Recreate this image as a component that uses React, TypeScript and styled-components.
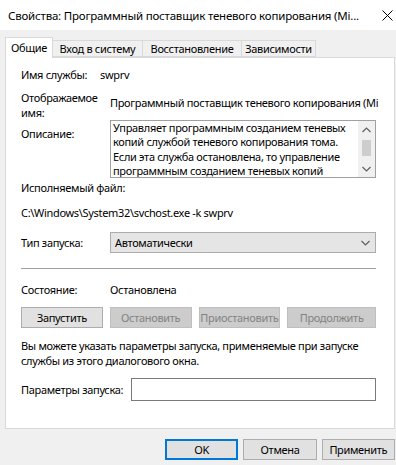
import React from "react";
import styled, { createGlobalStyle } from "styled-components";

const Global = createGlobalStyle`
  html, body { margin: 0; padding: 0; background: #f0f0f0; }
  body {
    font-family: "Noto Sans", "Segoe UI", sans-serif;
    font-size: 11px;
    letter-spacing: -0.32px;
    color: #000;
  }
`;

const Window = styled.div`
  width: 396px;
  height: 465px;
  background: #f0f0f0;
  overflow: hidden;
  display: flex;
  flex-direction: column;
`;

const TitleBar = styled.div`
  height: 30px;
  background: #fff;
  display: flex;
  align-items: center;
  justify-content: space-between;
  padding: 0 3px 0 8px;
  white-space: nowrap;
  font-size: 11.5px;
  letter-spacing: -0.2px;
`;

const Close = styled.div`
  width: 12px;
  height: 12px;
  display: flex;
  align-items: center;
  justify-content: center;
`;

const Body = styled.div`
  padding: 7px 1px 0 5px;
  display: flex;
  flex-direction: column;
`;

const TabRow = styled.div`
  display: flex;
  align-items: flex-end;
  height: 20px;
  position: relative;
  z-index: 1;
`;

const Tab = styled.div<{ $active?: boolean; $w: number }>`
  width: ${(p) => p.$w}px;
  box-sizing: border-box;
  height: ${(p) => (p.$active ? 21 : 17)}px;
  margin-bottom: ${(p) => (p.$active ? -1 : 0)}px;
  display: flex;
  align-items: center;
  justify-content: center;
  background: ${(p) => (p.$active ? "#fff" : "#f0f0f0")};
  border: 1px solid #d9d9d9;
  border-bottom: ${(p) => (p.$active ? "none" : "1px solid #d9d9d9")};
  margin-left: ${(p) => (p.$active ? 0 : -1)}px;
  white-space: nowrap;
  padding-bottom: ${(p) => (p.$active ? 2 : 0)}px;
`;

const Panel = styled.div`
  background: #fff;
  border: 1px solid #d9d9d9;
  height: 370px;
  padding: 0 18px 0 15px;
  display: flex;
  flex-direction: column;
  line-height: 15px;
`;

const Row = styled.div<{ $mt: number }>`
  display: flex;
  align-items: flex-start;
  margin-top: ${(p) => p.$mt}px;
`;

const Label = styled.div<{ $w?: number; $pt?: number }>`
  width: ${(p) => p.$w ?? 89}px;
  flex: none;
  padding-top: ${(p) => p.$pt ?? 0}px;
  color: #000;
  white-space: nowrap;
`;

const Value = styled.div<{ $pt?: number; $mr?: number }>`
  padding-top: ${(p) => p.$pt ?? 0}px;
  margin-right: ${(p) => p.$mr ?? 0}px;
  white-space: nowrap;
  overflow: hidden;
  flex: 1;
`;

const TextBox = styled.div`
  flex: 1;
  height: 58px;
  box-sizing: border-box;
  border: 1px solid #a0a0a0;
  display: flex;
  background: #fff;
`;

const TextBody = styled.div`
  flex: 1;
  padding: 0 0 0 2px;
  line-height: 14.3px;
  overflow: hidden;
`;

const ScrollBar = styled.div`
  width: 17px;
  display: flex;
  flex-direction: column;
  background: #f0f0f0;
`;

const Arrow = styled.div`
  height: 17px;
  display: flex;
  align-items: center;
  justify-content: center;
`;

const Track = styled.div`
  flex: 1;
  display: flex;
  justify-content: center;
  padding-top: 2px;
`;

const Thumb = styled.div`
  width: 9px;
  height: 16px;
  background: #cdcdcd;
`;

const Combo = styled.div`
  flex: 1;
  height: 21px;
  box-sizing: border-box;
  border: 1px solid #acacac;
  background: #e5e5e5;
  display: flex;
  align-items: center;
  justify-content: space-between;
  padding: 0 5px 0 4px;
`;

const Separator = styled.div`
  height: 1px;
  background: #a0a0a0;
  margin-top: 15px;
`;

const ButtonRow = styled.div`
  display: flex;
  gap: 7px;
  margin-top: 10px;
`;

const Button = styled.div<{ $disabled?: boolean; $w: number; $default?: boolean }>`
  width: ${(p) => p.$w}px;
  height: 21px;
  box-sizing: border-box;
  display: flex;
  align-items: center;
  justify-content: center;
  background: ${(p) => (p.$disabled ? "#cccccc" : "#e1e1e1")};
  border: ${(p) =>
    p.$default ? "2px solid #0078d7" : p.$disabled ? "1px solid #bfbfbf" : "1px solid #adadad"};
  color: ${(p) => (p.$disabled ? "#838383" : "#000")};
  white-space: nowrap;
`;

const Paragraph = styled.div`
  margin-top: 10px;
`;

const Input = styled.div`
  flex: 1;
  height: 23px;
  box-sizing: border-box;
  border: 1px solid #7a7a7a;
  background: #fff;
`;

const Footer = styled.div`
  display: flex;
  gap: 5px;
  padding: 10px 0 0 160px;
`;

const Chevron = ({ dir, color = "#606060" }: { dir: "up" | "down"; color?: string }) => (
  <svg width="9" height="6" viewBox="0 0 9 6">
    <path
      d={dir === "up" ? "M0.5 5 L4.5 1 L8.5 5" : "M0.5 1 L4.5 5 L8.5 1"}
      fill="none"
      stroke={color}
      strokeWidth="1.2"
    />
  </svg>
);

export default function App() {
  return (
    <Window>
      <Global />
      <TitleBar>
        <span>Свойства: Программный поставщик теневого копирования (Mi...</span>
        <Close>
          <svg width="11" height="11" viewBox="0 0 11 11">
            <path d="M0.5 0.5 L10.5 10.5 M10.5 0.5 L0.5 10.5" stroke="#000" strokeWidth="1" />
          </svg>
        </Close>
      </TitleBar>
      <Body>
        <TabRow>
          <Tab $active $w={48}>
            Общие
          </Tab>
          <Tab $w={91}>Вход в систему</Tab>
          <Tab $w={100}>Восстановление</Tab>
          <Tab $w={75}>Зависимости</Tab>
        </TabRow>
        <Panel>
          <Row $mt={9}>
            <Label $w={79}>Имя службы:</Label>
            <Value>swprv</Value>
          </Row>
          <Row $mt={8}>
            <Label>
              Отображаемое
              <br />
              имя:
            </Label>
            <Value $pt={5} $mr={-14}>
              Программный поставщик теневого копирования (Mi
            </Value>
          </Row>
          <Row $mt={0}>
            <Label $pt={6}>Описание:</Label>
            <TextBox>
              <TextBody>
                Управляет программным созданием теневых
                <br />
                копий службой теневого копирования тома.
                <br />
                Если эта служба остановлена, то управление
                <br />
                программным созданием теневых копий
              </TextBody>
              <ScrollBar>
                <Arrow>
                  <Chevron dir="up" />
                </Arrow>
                <Track>
                  <Thumb />
                </Track>
                <Arrow>
                  <Chevron dir="down" />
                </Arrow>
              </ScrollBar>
            </TextBox>
          </Row>
          <Row $mt={2}>
            <Label $w={200}>Исполняемый файл:</Label>
          </Row>
          <Row $mt={10}>
            <Value>C:\Windows\System32\svchost.exe -k swprv</Value>
          </Row>
          <Row $mt={12}>
            <Label $pt={3}>Тип запуска:</Label>
            <Combo>
              <span>Автоматически</span>
              <Chevron dir="down" />
            </Combo>
          </Row>
          <Separator />
          <Row $mt={13}>
            <Label>Состояние:</Label>
            <Value>Остановлена</Value>
          </Row>
          <ButtonRow>
            <Button $w={82}>Запустить</Button>
            <Button $w={82} $disabled>
              Остановить
            </Button>
            <Button $w={82} $disabled>
              Приостановить
            </Button>
            <Button $w={89} $disabled>
              Продолжить
            </Button>
          </ButtonRow>
          <Paragraph>
            Вы можете указать параметры запуска, применяемые при запуске
            <br />
            службы из этого диалогового окна.
          </Paragraph>
          <Row $mt={10}>
            <Label $w={110} $pt={4}>
              Параметры запуска:
            </Label>
            <Input />
          </Row>
        </Panel>
        <Footer>
          <Button $w={75} $default>
            OK
          </Button>
          <Button $w={75}>Отмена</Button>
          <Button $w={75}>Применить</Button>
        </Footer>
      </Body>
    </Window>
  );
}
